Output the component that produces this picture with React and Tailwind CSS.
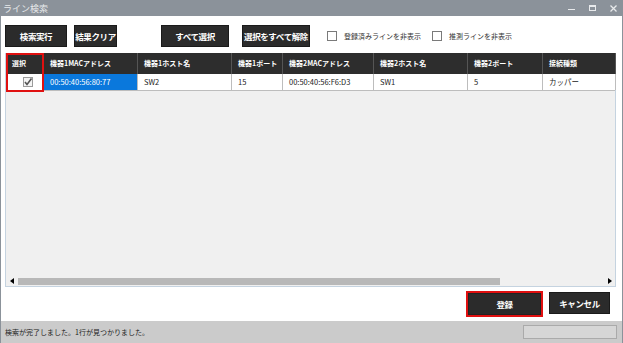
import React from 'react';

const font = { fontFamily: '"Noto Sans CJK JP", "Noto Sans", sans-serif' };

const columns = [
    { label: "選択", w: "w-[38px]" },
    { label: "機器1MACアドレス", w: "w-[94px]" },
    { label: "機器1ホスト名", w: "w-[94px]" },
    { label: "機器1ポート", w: "w-[51px]" },
    { label: "機器2MACアドレス", w: "w-[91px]" },
    { label: "機器2ホスト名", w: "w-[94px]" },
    { label: "機器2ポート", w: "w-[75px]" },
    { label: "接続種類", w: "w-[73px]" },
];

const row = ["", "00:50:40:56:80:77", "SW2", "15", "00:50:40:56:F6:D3", "SW1", "5", "カッパー"];

const DarkButton = ({ children, className = "" }) => (
    <button className={`h-[22px] bg-[#2b2b2b] border border-[#1a1a1a] text-white font-bold text-[8.5px] tracking-[-0.4px] whitespace-nowrap flex items-center justify-center ${className}`}>
        {children}
    </button>
);

const Check = ({ label }) => (
    <div className="flex items-center gap-[7px]">
        <div className="w-[10px] h-[10px] border border-[#7a7a7a] bg-white" />
        <span className="text-[7px] text-[#333] whitespace-nowrap">{label}</span>
    </div>
);

export default function App() {
    return (
        <div style={font} className="w-[623px] h-[343px] flex flex-col bg-[#8b929a] overflow-hidden">
            {/* title bar */}
            <div className="h-[16px] flex items-center justify-between pl-[3px] pr-[6px]">
                <span className="text-[9px] text-[#e8eaec] leading-none">ライン検索</span>
                <div className="flex items-center gap-[14px] text-[#e8eaec]">
                    <div className="w-[7px] h-[1px] bg-[#e8eaec] mt-[3px]" />
                    <div className="w-[7px] h-[6px] border border-[#e8eaec] border-t-2" />
                    <svg width="7" height="7" viewBox="0 0 7 7"><path d="M0.5 0.5 L6.5 6.5 M6.5 0.5 L0.5 6.5" stroke="#e8eaec" strokeWidth="1.3" /></svg>
                </div>
            </div>

            <div className="flex-1 mx-[1px] bg-white flex flex-col">
                {/* toolbar */}
                <div className="flex items-center pl-[4px] pt-[9px] h-[31px]">
                    <DarkButton className="w-[62px]">検索実行</DarkButton>
                    <DarkButton className="w-[43px] ml-[7px]">結果クリア</DarkButton>
                    <DarkButton className="w-[68px] ml-[44px]">すべて選択</DarkButton>
                    <DarkButton className="w-[68px] ml-[13px]">選択をすべて解除</DarkButton>
                    <div className="ml-[17px]"><Check label="登録済みラインを非表示" /></div>
                    <div className="ml-[11px]"><Check label="推測ラインを非表示" /></div>
                </div>

                {/* table */}
                <div className="mt-[6px] ml-[4px] w-[611px] h-[234px] bg-[#f0f0f0] border border-[#c5d3e0] border-t-0 flex flex-col relative">
                    <div className="flex h-[21px] bg-[#2d2d2d]">
                        {columns.map((c) => (
                            <div key={c.label} className={`${c.w} shrink-0 border-r border-[#555] flex items-center pl-[6px] text-white font-bold text-[7px] whitespace-nowrap`}>
                                {c.label}
                            </div>
                        ))}
                    </div>
                    <div className="flex h-[17px] bg-white border-b border-[#bdbdbd]">
                        {columns.map((c, i) => (
                            <div
                                key={c.label}
                                className={`${c.w} shrink-0 border-r border-[#bdbdbd] flex items-center text-[7.5px] whitespace-nowrap ${i === 1 ? "bg-[#0a78dc] text-white pl-[6px]" : "text-[#222] pl-[6px]"} ${i === 0 ? "justify-center pl-0" : ""}`}
                            >
                                {i === 0 ? (
                                    <svg width="10" height="10" viewBox="0 0 10 10">
                                        <rect x="0.5" y="0.5" width="9" height="9" fill="#f4f4f4" stroke="#9a9a9a" />
                                        <path d="M2 5 L4 7.5 L8.5 1.5" fill="none" stroke="#555" strokeWidth="1.6" />
                                    </svg>
                                ) : row[i]}
                            </div>
                        ))}
                    </div>
                    <div className="flex-1" />
                    {/* horizontal scrollbar */}
                    <div className="h-[8px] mb-[1px] flex items-center">
                        <div className="w-[12px] flex justify-center">
                            <div className="w-0 h-0 border-y-[3px] border-y-transparent border-r-[4px] border-r-black" />
                        </div>
                        <div className="w-[482px] h-[7px] bg-[#b8b8b8]" />
                        <div className="flex-1" />
                        <div className="w-[10px] flex justify-center">
                            <div className="w-0 h-0 border-y-[3px] border-y-transparent border-l-[4px] border-l-black" />
                        </div>
                    </div>
                    {/* highlighted select column */}
                    <div className="absolute left-0 top-0 w-[38px] h-[39px] border-2 border-[#e01010]" />
                </div>

                {/* bottom buttons */}
                <div className="flex justify-end items-start pt-[4px] pr-[12px] h-[34px]">
                    <div className="border-2 border-[#e01010]">
                        <DarkButton className="w-[73px] h-[20px] border-[#222]">登録</DarkButton>
                    </div>
                    <DarkButton className="w-[61px] h-[22px] ml-[6px] mt-[1px]">キャンセル</DarkButton>
                </div>

                {/* status bar */}
                <div className="flex-1 bg-[#cbcbcb] flex items-center justify-between pl-[4px] pr-[5px]">
                    <span className="text-[7px] text-[#222]">検索が完了しました。1行が見つかりました。</span>
                    <div className="w-[94px] h-[14px] border border-[#aaa] bg-[#d6d6d6]" />
                </div>
            </div>
        </div>
    );
}
